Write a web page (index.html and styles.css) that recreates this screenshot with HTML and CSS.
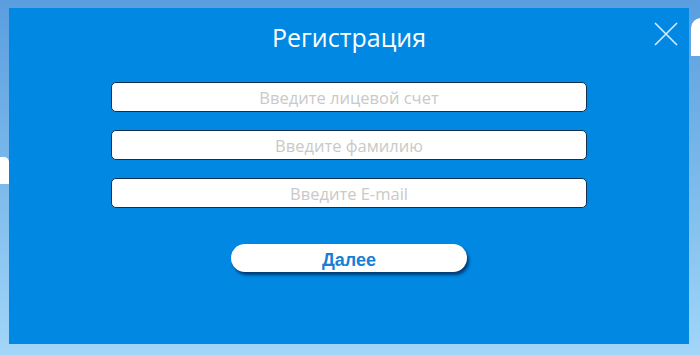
FILE: index.html
```html
<!DOCTYPE html>
<html lang="ru">
<head>
<meta charset="utf-8">
<title>Регистрация</title>
<link rel="stylesheet" href="styles.css">
</head>
<body>
<div class="deco deco-left"></div>
<div class="deco deco-right"></div>
<div class="modal">
  <div class="modal-head">
    <h1 class="title">Регистрация</h1>
    <button class="close" aria-label="Закрыть">
      <svg width="24" height="24" viewBox="0 0 24 24"><path d="M1 1L23 23M23 1L1 23" stroke="#d8ecfb" stroke-width="1.6" fill="none"/></svg>
    </button>
  </div>
  <form class="form">
    <input class="field" type="text" placeholder="Введите лицевой счет">
    <input class="field" type="text" placeholder="Введите фамилию">
    <input class="field" type="text" placeholder="Введите E-mail">
    <button class="next" type="button">Далее</button>
  </form>
</div>
</body>
</html>
```
FILE: styles.css
```css
html, body {
  margin: 0;
  padding: 0;
  height: 100%;
}
body {
  background: linear-gradient(180deg, #5a9ee0 0%, #7fbcec 55%, #a2d6f9 100%);
  font-family: "Open Sans", "Noto Sans", sans-serif;
  overflow: hidden;
  position: relative;
}
.deco {
  position: absolute;
  background: #ffffff;
}
.deco-left {
  left: 0;
  top: 157px;
  width: 9px;
  height: 27px;
  border-top-right-radius: 5px;
}
.deco-right {
  left: 691px;
  top: 18px;
  width: 20px;
  height: 38px;
  border-top-left-radius: 10px;
}
.modal {
  position: relative;
  margin: 8px 0 0 9px;
  width: 680px;
  height: 336px;
  background: #0088e2;
  box-sizing: border-box;
  padding-top: 14px;
}
.modal-head {
  position: relative;
  display: flex;
  justify-content: center;
}
.title {
  margin: 0;
  font-weight: 400;
  font-size: 25px;
  line-height: 30px;
  color: #ffffff;
  letter-spacing: 0;
}
.close {
  position: absolute;
  left: 645px;
  top: 0;
  width: 24px;
  height: 24px;
  padding: 0;
  border: 0;
  background: none;
}
.close svg { display: block; }
.form {
  display: flex;
  flex-direction: column;
  align-items: center;
  margin-top: 30px;
  gap: 18px;
}
.field {
  width: 476px;
  height: 30px;
  box-sizing: border-box;
  margin: 0;
  border: 1px solid #15304c;
  border-radius: 5px;
  background: #ffffff;
  text-align: center;
  font-family: "Open Sans", "Noto Sans", sans-serif;
  font-size: 16.5px;
  color: #333;
  padding: 0 8px;
  outline: none;
}
.field::placeholder {
  color: #c9c9c9;
}
.next {
  margin-top: 18px;
  width: 236px;
  height: 28px;
  border: 0;
  border-radius: 14px;
  background: #ffffff;
  box-shadow: 2px 3px 3px rgba(0, 35, 80, 0.75);
  font-family: "Liberation Sans", Arial, sans-serif;
  font-weight: 700;
  font-size: 18px;
  line-height: 28px;
  color: #1a7ed4;
  padding: 2px 0 0;
}
```
